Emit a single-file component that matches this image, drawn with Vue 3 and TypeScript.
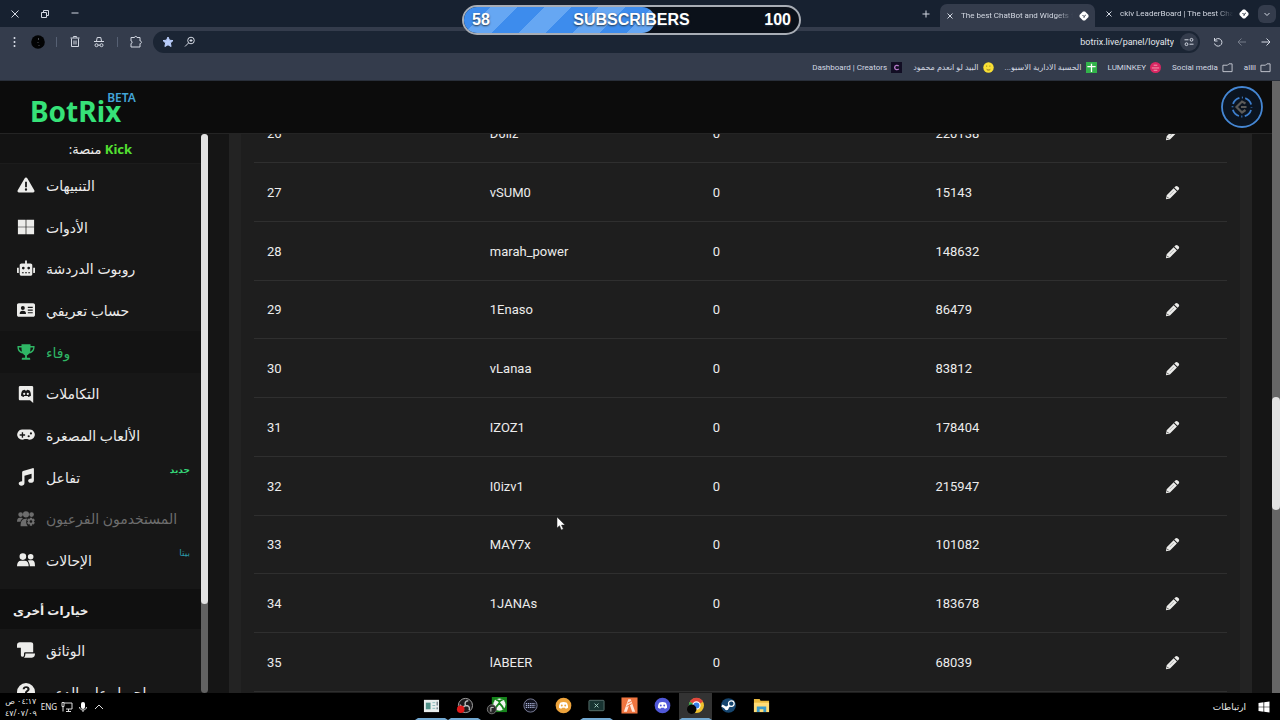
<script setup lang="ts">
interface Row { rank: number; name: string; watch: number; points: number }
interface MenuItem { label: string; icon: string; tag?: string; tagTone?: string; state?: string }

const rows: Row[] = [
  { rank: 26, name: 'D6llz', watch: 0, points: 220138 },
  { rank: 27, name: 'vSUM0', watch: 0, points: 15143 },
  { rank: 28, name: 'marah_power', watch: 0, points: 148632 },
  { rank: 29, name: '1Enaso', watch: 0, points: 86479 },
  { rank: 30, name: 'vLanaa', watch: 0, points: 83812 },
  { rank: 31, name: 'IZOZ1', watch: 0, points: 178404 },
  { rank: 32, name: 'I0izv1', watch: 0, points: 215947 },
  { rank: 33, name: 'MAY7x', watch: 0, points: 101082 },
  { rank: 34, name: '1JANAs', watch: 0, points: 183678 },
  { rank: 35, name: 'lABEER', watch: 0, points: 68039 },
]

const icons: Record<string, string> = {
  warning: 'M10 1.8c.7 0 1.2.3 1.6.9l7.6 13.2c.7 1.2 0 2.3-1.4 2.3H2.2c-1.4 0-2.1-1.1-1.4-2.3L8.400 2.700c.4-.6.9-.9 1.600-.9ZM9 6.500v6h2v-6ZM10 13.700a1.300 1.300 0 1 0 0 2.600 1.300 1.300 0 0 0 0-2.600Z',
  tools: 'M1 2h8.600v7.600H1ZM10.400 2H19v7.600h-8.600ZM1 10.400h8.600V18H1ZM10.400 10.400H19V18h-8.600Z',
  robot: 'M9 .5h2V4h4c1.200 0 2 .8 2 2v9.500c0 1.200-.8 2-2 2H5c-1.200 0-2-.8-2-2V6c0-1.200.8-2 2-2h4ZM0 8.500h2v6H1c-.6 0-1-.4-1-1ZM18 8.500h2v5c0 .6-.4 1-1 1h-1ZM7 7.500a1.500 1.500 0 1 0 0 3 1.500 1.500 0 0 0 0-3ZM13 7.500a1.500 1.500 0 1 0 0 3 1.500 1.500 0 0 0 0-3ZM5.500 13.500v1.300h2v-1.300ZM9 13.500v1.300h2v-1.300ZM12.500 13.500v1.300h2v-1.300Z',
  profile: 'M2 2.500h16c1 0 2 .8 2 2v11c0 1.200-1 2-2 2H2c-1.200 0-2-.8-2-2v-11c0-1.200.8-2 2-2ZM6.500 5.500a2.200 2.200 0 1 0 0 4.400 2.200 2.200 0 0 0 0-4.400ZM3 14.500h7c0-2.500-1-3.600-3.500-3.600S3 12 3 14.500ZM12 6.500v1.200h5.500V6.500ZM12 9.500v1.200h5.500V9.500ZM12 12.500v1.200h5.500v-1.200Z',
  trophy: 'M5 1.500h10v1.700h4.500c.3 5-2 7.500-6 8.400-.8 1.200-1.700 1.900-2.500 2.200v2.700h2.500c.8 0 1.200.5 1.200 1.300v.7H5.300v-.7c0-.8.400-1.300 1.200-1.300H9v-2.700c-.8-.3-1.700-1-2.500-2.200-4-.9-6.300-3.400-6-8.400H5ZM2 4.900c.2 2.300 1.300 3.800 3.600 4.700C5.100 8.200 5 6.500 5 4.900ZM15 4.900c0 1.600-.1 3.300-.6 4.700C16.700 8.700 17.800 7.200 18 4.900Z',
  integration: 'M3.500 1h13C17.500 1 18 1.700 18 2.500V20l-3.500-3h-11C2.500 17 2 16.400 2 15.500v-13C2 1.700 2.500 1 3.500 1ZM6 6c-1 1.500-1.500 3.500-1.500 6 1 .8 1.900 1.100 2.900 1.200l.7-1h3.800l.7 1c1-.1 1.900-.4 2.900-1.200 0-2.500-.5-4.500-1.500-6-1-.5-1.800-.7-2.600-.8l-.5.9H9.100l-.5-.9C7.800 5.300 7 5.500 6 6ZM8 8.500a1.200 1.300 0 1 1 0 2.600 1.200 1.300 0 0 1 0-2.600ZM12 8.500a1.200 1.300 0 1 1 0 2.600 1.200 1.300 0 0 1 0-2.600Z',
  games: 'M5.500 4h9a5.600 5.600 0 1 1-3 10.500h-3A5.600 5.600 0 1 1 5.500 4ZM5.300 7v2.300H3v1.500h2.300V13h1.500v-2.200H9V9.300H6.800V7ZM13 10.200a1.200 1.200 0 1 0 0 2.400 1.200 1.200 0 0 0 0-2.400ZM15.500 7a1.200 1.200 0 1 0 0 2.400 1.200 1.200 0 0 0 0-2.400Z',
  music: 'M18.800 1.200v12.300c0 1.900-1.500 3-3.400 3s-3-1-3-2.400 1.500-2.500 3.800-2.500V6.400L8.300 8.700v8c0 1.900-1.500 3-3.400 3s-3-1-3-2.400 1.500-2.500 3.800-2.500V4.700c0-.8.3-1.300 1-1.500L17.300.2c1-.3 1.500.1 1.500 1Z',
  usersGear: 'M4 2.500a2.600 2.600 0 1 1 0 5.200 2.600 2.600 0 0 1 0-5.200ZM10 1.500a3.400 3.400 0 1 1 0 6.800 3.400 3.400 0 0 1 0-6.800ZM16.200 2.500a2.600 2.600 0 0 1 0 5.200 2.600 2.600 0 0 1 0-5.200ZM0 13c0-3 1-4.500 3-4.500h2.500l1 1C4.800 10.500 4 11.500 4 13ZM4 18c0-5.500 1.500-8.500 7.500-8.500-1.800 2.500-1.800 6 .5 8.500ZM14.300 8.500h2.400l.4 1.500 1.500-.5 1.200 2-1.100 1.300 1.100 1.300-1.200 2-1.500-.5-.4 1.900h-2.400l-.4-1.900-1.500.5-1.200-2 1.100-1.300-1.100-1.300 1.200-2 1.500.5ZM15.500 11.300a1.500 1.500 0 1 0 0 3 1.500 1.500 0 0 0 0-3Z',
  users: 'M6.500 2.500a3.700 3.700 0 1 1 0 7.400 3.700 3.700 0 0 1 0-7.400ZM15.200 3.300a3.100 3.100 0 1 1 0 6.200 3.100 3.100 0 0 1 0-6.200ZM0 17c0-4 1.500-6.200 4.500-6.200h4C11.500 10.800 13 13 13 17ZM12 10.800c.6-.3 1.200-.4 2-.4h2.500c2.300 0 3.500 1.600 3.500 6.600h-5.700c-.1-2.500-.9-4.900-2.300-6.200Z',
  docs: 'M3 1.500h12.500c1.500 0 2.500 1 2.500 2.500v8.500H9.500c-1 0-1.700.6-1.700 1.500v1.500c0 1.500-.8 2-1.800 2s-1.700-.8-1.700-2V7.500H0V4.500c0-2 1.500-3 3-3ZM9.300 14H20c0 2.700-1 4.500-3.500 4.500H7.700c1.200-.8 1.600-2.200 1.600-4.500Z',
  help: 'M10 0a10 10 0 1 1 0 20 10 10 0 0 1 0-20ZM6.300 7h2.200c.1-1 .7-1.500 1.600-1.500s1.500.5 1.500 1.300c0 .7-.3 1-1.200 1.600-1.100.7-1.500 1.400-1.500 2.800h2.200c0-.7.2-1 1.100-1.600 1.200-.7 1.800-1.600 1.800-2.900 0-2-1.500-3.200-3.800-3.200S6.400 4.800 6.300 7ZM10 13a1.400 1.400 0 1 0 0 2.800A1.400 1.400 0 0 0 10 13Z',
}

const menu: MenuItem[] = [
  { label: 'التنبيهات', icon: 'warning' },
  { label: 'الأدوات', icon: 'tools' },
  { label: 'روبوت الدردشة', icon: 'robot' },
  { label: 'حساب تعريفي', icon: 'profile' },
  { label: 'وفاء', icon: 'trophy', state: 'active' },
  { label: 'التكاملات', icon: 'integration' },
  { label: 'الألعاب المصغرة', icon: 'games' },
  { label: 'تفاعل', icon: 'music', tag: 'جديد', tagTone: 'new' },
  { label: 'المستخدمون الفرعيون', icon: 'usersGear', state: 'muted' },
  { label: 'الإحالات', icon: 'users', tag: 'بيتا', tagTone: 'beta' },
]
const moreMenu: MenuItem[] = [
  { label: 'الوثائق', icon: 'docs' },
  { label: 'احصل على الدعم', icon: 'help' },
]
const apps = ['news', 'obs', 'xbox', 'keyboard', 'chat', 'remote', 'fivem', 'discord', 'chrome', 'steam', 'files']
const running = ['news', 'obs', 'remote', 'chrome']
</script>

<template>
  <div class="desktop">
    <section class="browser">
      <div class="tabstrip">
        <div class="window-buttons">
          <button aria-label="Close window"><svg viewBox="0 0 10 10"><path d="M1.500 1.500l7 7M8.500 1.500l-7 7" /></svg></button>
          <button aria-label="Restore window"><svg viewBox="0 0 10 10"><path d="M1.500 3.500h5v5h-5ZM3.500 3.500v-2h5v5h-2" /></svg></button>
          <button aria-label="Minimise window"><svg viewBox="0 0 10 10"><path d="M1.500 4h7" /></svg></button>
        </div>
        <div class="tabs">
          <button class="plus" aria-label="New tab"><svg viewBox="0 0 10 10"><path d="M5 1.500v7M1.500 5h7" /></svg></button>
          <div class="tab current">
            <button aria-label="Close tab"><svg viewBox="0 0 10 10"><path d="M2.500 2.500l5 5M7.500 2.500l-5 5" /></svg></button>
            <span class="tab-title">The best ChatBot and Widgets for</span>
            <svg class="favicon" viewBox="0 0 10 10"><path d="M4 .5h2L9.500 4v2L6 9.500H4L.5 6V4Z" fill="#fff" /><path d="M3.500 4L5 5.500 6.800 4M5 5.500v1.300" stroke="#343c4c" fill="none" /></svg>
          </div>
          <div class="tab">
            <button aria-label="Close tab"><svg viewBox="0 0 10 10"><path d="M2.500 2.500l5 5M7.500 2.500l-5 5" /></svg></button>
            <span class="tab-title">ckiv LeaderBoard | The best ChatBot</span>
            <svg class="favicon" viewBox="0 0 10 10"><path d="M4 .5h2L9.500 4v2L6 9.500H4L.5 6V4Z" fill="#fff" /><path d="M3.500 4L5 5.500 6.800 4M5 5.500v1.300" stroke="#172130" fill="none" /></svg>
          </div>
          <button class="tab-search" aria-label="Search tabs"><svg viewBox="0 0 10 10"><path d="M2.500 4L5 6.500 7.500 4" /></svg></button>
        </div>
      </div>

      <div class="toolbar">
        <div class="tools">
          <button aria-label="Menu"><svg viewBox="0 0 14 14"><path d="M7.500 2v2M7.500 6v2M7.500 10v2" stroke-width="1.600" /></svg></button>
          <button aria-label="Profile"><svg viewBox="0 0 14 14"><circle cx="7" cy="7" r="6.800" fill="#020304" stroke="none" /><path d="M7.500 3v2M7 7v1M8 10v1" stroke="#4a4d52" /></svg></button>
          <i class="divider"></i>
          <button aria-label="Delete browsing data"><svg viewBox="0 0 14 14"><path d="M3.500 3.500v8h7v-8M2.500 3h9M5.500 2.500v-1h3v1M6 5.500v4M8 5.500v4" /></svg></button>
          <button aria-label="Incognito"><svg viewBox="0 0 14 14"><path d="M4.500 6l.7-3.500h3.600L9.500 6M2 6.500h10M6 10.200h2" /><circle cx="4.500" cy="10.200" r="1.500" /><circle cx="9.500" cy="10.200" r="1.500" /></svg></button>
          <i class="divider"></i>
          <button aria-label="Extensions"><svg viewBox="0 0 14 14"><path d="M2 2.500h3.500c0-1.500 2.500-1.500 2.500 0h3v3.500c2 0 2 2.500 0 2.500v3.500H2V8.500c1.500 0 1.500-2.500 0-2.500Z" /></svg></button>
        </div>
        <div class="address">
          <button aria-label="Bookmark"><svg viewBox="0 0 14 14"><path d="M7 2l1.500 3.200 3.500.4-2.600 2.400.7 3.500L7 9.800l-3.100 1.700.7-3.500L2 5.600l3.500-.4Z" fill="#b9cdfb" stroke="#b9cdfb" /></svg></button>
          <button aria-label="Zoom"><svg viewBox="0 0 14 14"><circle cx="8" cy="5.500" r="3.300" /><path d="M5.500 8L2 11.500M6.500 5.500h3M8 4v3" /></svg></button>
          <input aria-label="Address" value="botrix.live/panel/loyalty" />
          <button class="site" aria-label="Site information"><svg viewBox="0 0 14 14"><path d="M2.500 4.800h4M7.500 9.200h4" /><circle cx="9.500" cy="4.800" r="1.400" /><circle cx="4.500" cy="9.200" r="1.400" /></svg></button>
        </div>
        <div class="nav">
          <button aria-label="Reload"><svg viewBox="0 0 14 14"><path d="M3.500 3v3h3M3.700 5.700a3.800 3.800 0 1 1-.2 2.800" /></svg></button>
          <button class="dim" aria-label="Forward"><svg viewBox="0 0 14 14"><path d="M11 7H3M6.500 3.500L3 7l3.500 3.500" /></svg></button>
          <button aria-label="Back"><svg viewBox="0 0 14 14"><path d="M2.500 7H11M7.500 3.500L11 7l-3.500 3.500" /></svg></button>
        </div>
      </div>

      <nav class="bookmarks">
        <a href="#"><span>Dashboard | Creators</span><svg viewBox="0 0 12 12"><rect width="12" height="12" fill="#120e24" /><path d="M8.500 4.500C7 3 4 3.500 4 6s3 3 4.500 1.500" stroke="#b478c8" stroke-width="1.500" fill="none" /></svg></a>
        <a href="#"><span dir="rtl">البيد لو انعدم محمود</span><svg viewBox="0 0 12 12"><circle cx="6" cy="6" r="5.700" fill="#f8df35" /><path d="M4 4v1M7.500 4v1M4 8c1 1 3 1 4 0" stroke="#7c6219" fill="none" /></svg></a>
        <a href="#"><span dir="rtl">الحسبة الادارية الاسبو...</span><svg viewBox="0 0 12 12"><rect width="12" height="12" fill="#32b34a" /><path d="M6 2v9M1.500 5h9" stroke="#fff" stroke-width="1.400" /></svg></a>
        <a href="#"><span>LUMINKEY</span><svg viewBox="0 0 12 12"><circle cx="6" cy="6" r="6" fill="#d92662" /><path d="M2 6.500h8M4 3.500h4M4 9h4" stroke="#f6a6b8" /></svg></a>
        <a href="#"><span>Social media</span><svg viewBox="0 0 12 12"><path d="M1 10.500V3.500h5l1.500-1.500H11v8.500Z" fill="none" stroke="#c9cdd5" /></svg></a>
        <a href="#"><span>allll</span><svg viewBox="0 0 12 12"><path d="M1 10.500V3.500h5l1.500-1.500H11v8.500Z" fill="none" stroke="#c9cdd5" /></svg></a>
      </nav>

      <div class="goal">
        <div class="goal-fill"></div>
        <span>58</span><span>SUBSCRIBERS</span><span>100</span>
      </div>
    </section>

    <div class="page">
      <div class="site-area">
        <header class="site-header">
          <a class="brand" href="#">BotRix<sup>BETA</sup></a>
          <button class="avatar" aria-label="Account">
            <svg viewBox="0 0 42 42"><circle cx="21" cy="21" r="20" fill="#0b1420" stroke="#4587d4" stroke-width="1.800" /><circle cx="21" cy="21" r="9.500" fill="none" stroke="#3d7fce" stroke-width="1.800" stroke-dasharray="9 2.500 1 2.420" stroke-dashoffset="-3" /><path d="M24.500 17.500L21 15.500 15.500 21l5.500 5.500 3.500-2.500M25.500 21H20" fill="none" stroke="#5b5a58" stroke-width="2.200" /></svg>
          </button>
        </header>
        <div class="columns">
          <aside class="sidebar">
            <div class="menu">
              <p class="platform" dir="rtl"><b>Kick</b> منصة:</p>
              <ul>
                <li v-for="m in menu" :key="m.icon" :class="m.state">
                  <a href="#">
                    <svg viewBox="0 0 20 20"><path :d="icons[m.icon]" fill-rule="evenodd" /></svg>
                    <span dir="rtl">{{ m.label }}</span>
                    <small v-if="m.tag" :class="m.tagTone" dir="rtl">{{ m.tag }}</small>
                  </a>
                </li>
              </ul>
              <h2 dir="rtl">خيارات أخرى</h2>
              <ul>
                <li v-for="m in moreMenu" :key="m.icon">
                  <a href="#">
                    <svg viewBox="0 0 20 20"><path :d="icons[m.icon]" fill-rule="evenodd" /></svg>
                    <span dir="rtl">{{ m.label }}</span>
                  </a>
                </li>
              </ul>
            </div>
            <div class="side-scroll"><i></i></div>
          </aside>
          <main class="content">
            <div class="card">
              <table>
                <tbody>
                  <tr v-for="r in rows" :key="r.rank">
                    <td>{{ r.rank }}</td>
                    <td>{{ r.name }}</td>
                    <td>{{ r.watch }}</td>
                    <td>{{ r.points }}</td>
                    <td class="edit">
                      <button :aria-label="`Edit ${r.name}`"><svg viewBox="0 0 16 16"><path d="M11 1.600c.8-.8 1.800-.8 2.600 0l.9.9c.8.8.8 1.800 0 2.600l-1.100 1.100L9.900 2.700ZM9.200 3.400l3.500 3.500-7.400 7.400L1 15.200l.8-4.400Z" fill="#ececea" /><path d="M5 10.800l4.500-4.500" stroke="#8f9492" stroke-width=".7" /><path d="M2.300 12.600l1.300 1.300" stroke="#333" /></svg></button>
                    </td>
                  </tr>
                </tbody>
              </table>
            </div>
          </main>
        </div>
      </div>
      <div class="page-scroll"><i></i></div>
    </div>

    <footer class="taskbar">
      <div class="tray">
        <time dir="rtl"><span>٠٤:١٧ ص</span><span dir="ltr">٤٧/٠٧/٠٩</span></time>
        <span>ENG</span>
        <svg viewBox="0 0 12 12"><path d="M3 2h8v6H5M1 1.500h2v4H1ZM2 5.500v5M5 10.500h5M7.500 8v2.500" fill="none" stroke="#ddd" /></svg>
        <svg viewBox="0 0 12 12"><rect x="4" y="1" width="4" height="7" rx="2" fill="#fff" /><path d="M2.500 6c0 4 7 4 7 0M6 9v2" fill="none" stroke="#ddd" /></svg>
        <svg viewBox="0 0 12 12"><path d="M2 8l4-4 4 4" fill="none" stroke="#ddd" /></svg>
      </div>
      <div class="apps">
        <button v-for="a in apps" :key="a" :class="{ running: running.includes(a), focused: a === 'chrome' }" :aria-label="a">
          <svg viewBox="0 0 18 18">
            <g v-if="a === 'news'"><rect x="1" y="3" width="16" height="13" fill="#e9eeee" /><path d="M3 6h5v7H3Z" fill="#4f9088" /><path d="M10 6h3M10 9h3M10 12h3" stroke="#8bb" /><path d="M15 5v4M15 11v2" stroke="#345" /></g>
            <g v-else-if="a === 'obs'"><circle cx="10" cy="9" r="7.500" fill="#1b1a1c" stroke="#aaa" /><path d="M10 9c-1-3 0-5 3-5M10 9c3 0 5 1 4 5M10 9c-2 2-4 2-6-1" fill="none" stroke="#bbb" stroke-width="1.500" /><circle cx="5" cy="13" r="4" fill="#e01818" /></g>
            <g v-else-if="a === 'xbox'"><rect x="3" y="0" width="16" height="16" fill="#16851c" /><circle cx="11" cy="8" r="6.500" fill="#f2f6f2" /><path d="M6.500 13c1-3 3-5 4.500-6.500 1.500 1.500 3.500 3.500 4.500 6.500M7.500 3c2 0 3 1.500 3.500 2 .5-.5 1.500-2 3.500-2" fill="none" stroke="#16851c" stroke-width="2" /><circle cx="3" cy="13" r="4.800" fill="#252525" stroke="#777" /><path d="M2 15.500V11h3" fill="none" stroke="#ddd" /></g>
            <g v-else-if="a === 'keyboard'"><circle cx="9" cy="9" r="7" fill="#11121d" stroke="#7c809a" /><path d="M4 7h10M4 9h10M4 11h10" stroke="#a9b1d8" stroke-width="1.300" stroke-dasharray="1.500 .8" /></g>
            <g v-else-if="a === 'chat' || a === 'discord'"><circle cx="9" cy="9" r="8.300" :fill="a === 'chat' ? '#eda33c' : '#5058d8'" /><path d="M5.500 6c2-1 5-1 7 0 1 2 1.500 3.500 1.300 5.500-1 .7-1.700 1-2.600 1l-.5-1H7.300l-.5 1c-.9 0-1.600-.3-2.600-1C4 9.500 4.500 8 5.500 6Z" fill="#fff" /><circle cx="7.200" cy="9" r="1" :fill="a === 'chat' ? '#eda33c' : '#5058d8'" /><circle cx="10.800" cy="9" r="1" :fill="a === 'chat' ? '#eda33c' : '#5058d8'" /></g>
            <g v-else-if="a === 'remote'"><rect x="1" y="3.500" width="16" height="11" rx="1" fill="#183331" stroke="#58716d" /><path d="M7 7l4 4M11 7l-4 4" stroke="#a9d3c8" /></g>
            <g v-else-if="a === 'fivem'"><rect x=".5" y=".5" width="17" height="17" fill="#ef7540" /><path d="M3 15.500L7.700 2.500h2.600L15 15.500h-3.200L9 7.500l-2.800 8Z" fill="#ffe5d9" /><path d="M7 6.500l4-2M6 10l5.500-3" stroke="#ef7540" /></g>
            <g v-else-if="a === 'chrome'"><circle cx="10" cy="9" r="8" fill="#efc12d" /><path d="M10 9L3 5a8 8 0 0 1 14 0Z" fill="#e2473d" /><path d="M10 9L3 5a8 8 0 0 0 5 11.800Z" fill="#36a452" /><circle cx="10" cy="9" r="3.800" fill="#397fe6" stroke="#fff" stroke-width="1.200" /><circle cx="5" cy="13" r="5" fill="#050505" /></g>
            <g v-else-if="a === 'steam'"><circle cx="9" cy="9" r="7.800" fill="#164670" /><path d="M2 9l5 3 5-5" fill="none" stroke="#fff" stroke-width="2.500" /><circle cx="12" cy="7" r="3" fill="#164670" stroke="#fff" stroke-width="1.300" /><circle cx="7" cy="12" r="2" fill="#fff" /></g>
            <g v-else><path d="M1 2h6l1 2h9v12H1Z" fill="#e9b93e" /><path d="M1 6h16v10H1Z" fill="#ffdc76" /><path d="M4 10h10v6h-3v-3H7v3H4Z" fill="#3a9ac9" /></g>
          </svg>
        </button>
      </div>
      <div class="start">
        <span dir="rtl">ارتباطات</span>
        <button aria-label="Start"><svg viewBox="0 0 12 12"><path d="M.5 2L5.500 1.300v4.400h-5ZM6.200 1.200L11.500.5v5.200H6.200ZM.5 6.300h5v4.400L.5 10ZM6.200 6.300h5.300v5.200l-5.300-.7Z" fill="#fff" /></svg></button>
      </div>
    </footer>

    <svg class="cursor" viewBox="0 0 10 16"><path d="M1 1v11l2.500-2.300L5.300 14l2-.9-1.800-4L9 9Z" fill="#fff" stroke="#222" stroke-width=".5" /></svg>
  </div>
</template>

<style>
body { background: #000; }
</style>

<style scoped>
* { box-sizing: border-box; }
.desktop { position: relative; display: flex; flex-direction: column; height: 100vh; overflow: hidden; font-family: "Noto Sans", "DejaVu Sans", sans-serif; font-size: 13px; color: #ececec; background: #000; }
button { display: grid; place-items: center; padding: 0; border: 0; background: none; color: inherit; font: inherit; }
a { color: inherit; text-decoration: none; }
ul { list-style: none; margin: 0; padding: 0; }
svg { display: block; flex: none; }

.browser { position: relative; flex: none; background: #343c4c; color: #d3d8e2; font-family: Roboto, "Noto Sans", "DejaVu Sans", sans-serif; font-size: 8px; border-bottom: 1px solid #292f3a; }
.browser button svg { width: 14px; height: 14px; fill: none; stroke: currentColor; stroke-width: 1; }
.browser .tabstrip button svg { width: 10px; height: 10px; }
.tabstrip { display: flex; justify-content: space-between; height: 27px; background: #172130; }
.window-buttons { display: flex; align-items: center; }
.window-buttons button { width: 30px; height: 27px; }
.tabs { display: flex; align-items: center; }
.plus { width: 28px; height: 27px; }
.tab { display: flex; align-items: center; gap: 6px; width: 159px; height: 23px; margin-left: 4px; padding: 0 9px 0 5px; }
.tab.current { align-self: flex-end; width: 155px; margin-left: 0; padding-right: 6px; background: #343c4c; border-radius: 7px 7px 0 0; }
.tab button { width: 10px; }
.tab-title { flex: 1; overflow: hidden; white-space: nowrap; -webkit-mask-image: linear-gradient(90deg, #000 85%, transparent); mask-image: linear-gradient(90deg, #000 85%, transparent); }
.favicon { width: 10px; height: 10px; }
.tab-search { width: 18px; height: 18px; margin-right: 4px; border-radius: 6px; background: #343c4c; }

.toolbar { display: flex; align-items: center; height: 29px; padding: 0 7px; }
.tools { display: flex; align-items: center; gap: 10px; width: 146px; }
.tools button { width: 14px; }
.divider { width: 1px; height: 10px; margin: 0 1px; background: #566073; }
.address { display: flex; flex: 1; align-items: center; gap: 8px; height: 22px; padding: 0 2px 0 8px; border-radius: 11px; background: #1b2534; }
.address input { flex: 1; min-width: 0; border: 0; padding: 0; background: none; outline: 0; text-align: right; color: #e4e7ed; font: 9px Roboto, sans-serif; }
.address .site { width: 18px; height: 18px; margin-left: -2px; border-radius: 50%; background: #343c4c; }
.nav { display: flex; gap: 10px; padding-left: 11px; }
.dim { opacity: .4; }
.bookmarks { display: flex; justify-content: flex-end; align-items: center; gap: 11px; height: 24px; padding: 0 9px 2px; }
.bookmarks a { display: flex; align-items: center; gap: 4px; white-space: nowrap; }
.bookmarks svg { width: 11px; height: 11px; }

.goal { position: absolute; top: 5px; left: 50%; width: 339px; height: 30px; margin-left: -178px; display: grid; grid-template-columns: 1fr auto 1fr; align-items: center; padding: 0 8px; border: 2px solid #a8adb5; border-radius: 15px; background: #0b111a; overflow: hidden; font: bold 16px "Liberation Sans", sans-serif; color: #fff; text-shadow: 0 1px 2px #234; }
.goal span { position: relative; }
.goal span:last-child { text-align: right; }
.goal-fill { position: absolute; inset: 0 43% 0 0; border-radius: 0 13px 13px 0; background: repeating-linear-gradient(135deg, #3d8ced 0 19px, #66a7f3 19px 38px); }

.page { flex: 1; display: flex; min-height: 0; background: #151515; }
.site-area { flex: 1; min-width: 0; display: flex; flex-direction: column; }
.site-header { flex: none; display: flex; align-items: center; justify-content: space-between; height: 53px; padding: 0 9px 0 30px; background: #0c0c0c; border-bottom: 1px solid #242424; }
.brand { display: flex; align-items: flex-start; font: bold 28px/36px "Noto Sans", sans-serif; color: #36e278; padding-top: 8px; }
.brand sup { margin: -2px 0 0 -14px; font-size: 12px; line-height: 14px; font-weight: 600; color: #43a5d8; }
.avatar svg { width: 42px; height: 42px; }
.columns { flex: 1; display: flex; min-height: 0; }
.sidebar { display: flex; width: 208px; background: #171717; }
.menu { flex: 1; overflow: hidden; }
.platform { margin: 0; height: 30px; line-height: 30px; text-align: center; border-bottom: 1px solid #1c1c1c; background: #131313; }
.platform b { color: #53e032; }
li { height: 42px; }
li:nth-child(3n) { height: 41px; }
li a { display: flex; align-items: center; gap: 11px; height: 100%; padding: 0 11px 0 17px; font-size: 14px; white-space: nowrap; }
li svg { width: 18px; height: 18px; fill: #ececea; }
.active { background: #131313; color: #2fb765; }
.active svg { fill: #2fb765; }
.muted { color: #6d6d6d; }
.muted svg { fill: #6d6d6d; }
small { align-self: flex-start; margin: 7px 0 0 auto; font-size: 9px; }
.new { color: #36d879; font-weight: bold; }
.beta { color: #2b99aa; }
h2 { margin: 8px 0 0; height: 40px; padding: 0 13px; background: #101010; font-size: 12px; line-height: 44px; text-align: left; }
.side-scroll { width: 7px; border-radius: 4px; background: #626262; }
.side-scroll i { display: block; height: 84%; border-radius: 4px; background: #e2e2e2; }

.content { flex: 1; min-width: 0; padding: 0 20px 0 21px; overflow: hidden; background: #151515; }
.card { height: 100%; padding: 0 13px; border: solid #232323; border-width: 0 12px; background: #1e1e1e; overflow: hidden; }
table { width: 100%; margin-top: -30px; border-collapse: separate; border-spacing: 0; table-layout: fixed; font: 13px Roboto, "Open Sans", sans-serif; }
td { width: 22.9%; height: 59px; padding: 0 13px; border-bottom: 1px solid #2f2f2f; }
tr:nth-child(4n) td { height: 58px; }
td.edit { width: auto; padding-left: 19px; }
.edit button { width: 16px; }
.edit svg { width: 15px; height: 15px; }
.page-scroll { width: 8px; background: #666; padding-top: 316px; }
.page-scroll i { display: block; height: 113px; border-radius: 4px; background: #e2e2e2; }

.taskbar { flex: none; display: flex; align-items: center; height: 27px; font-size: 8px; background: #000; }
.tray { display: flex; align-items: center; flex: 417 1 0; gap: 4px; padding-left: 5px; }
.start { display: flex; align-items: center; flex: 500 1 0; }
.tray svg, .start svg { width: 12px; height: 12px; }
time { display: flex; flex-direction: column; align-items: center; line-height: 12px; }
.apps { display: flex; height: 27px; }
.apps button { width: 33px; border: solid #000; border-width: 0 3px 2px; }
.apps svg { width: 17px; height: 17px; overflow: visible; }
.apps .running { border-bottom-color: #73a9d2; }
.apps .focused { background: #333; border-left-color: #333; border-right-color: #333; }
.start { justify-content: flex-end; gap: 12px; padding-right: 10px; font-size: 9px; }

.cursor { position: absolute; left: 556px; top: 516px; width: 10px; height: 16px; }
</style>
